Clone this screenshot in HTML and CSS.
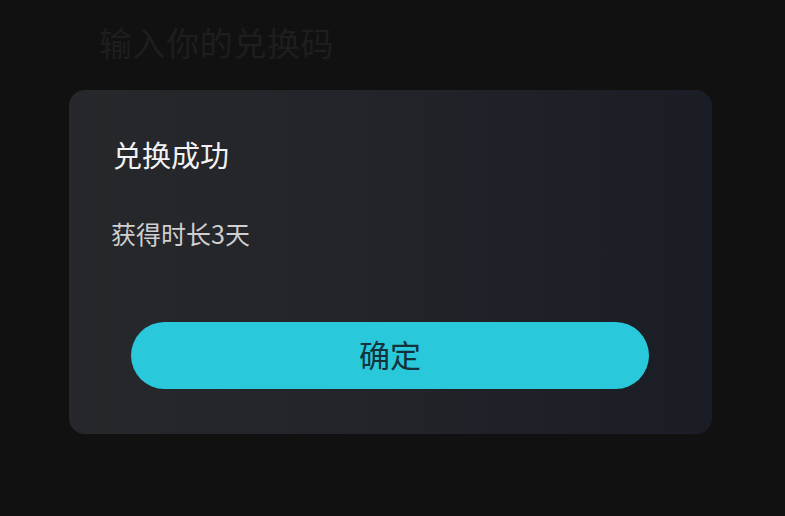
FILE: index.html
```html
<!DOCTYPE html>
<html lang="zh">
<head>
<meta charset="utf-8">
<link rel="stylesheet" href="styles.css">
</head>
<body>
<div class="page">
  <div class="input-placeholder">输入你的兑换码</div>
  <div class="dialog">
    <div class="dialog-title">兑换成功</div>
    <div class="dialog-text">获得时长3天</div>
    <button class="confirm-btn">确定</button>
  </div>
</div>
</body>
</html>
```
FILE: styles.css
```css
html, body {
  margin: 0;
  padding: 0;
  background: #111111;
  width: 785px;
  height: 516px;
  overflow: hidden;
  font-family: "Noto Sans CJK SC", "Noto Sans", sans-serif;
}
.page {
  padding-top: 22px;
}
.input-placeholder {
  margin-left: 99px;
  font-size: 33px;
  letter-spacing: 0.6px;
  line-height: 40px;
  color: #1e1e1f;
  height: 40px;
}
.dialog {
  margin-top: 28px;
  margin-left: 69px;
  width: 643px;
  box-sizing: border-box;
  height: 344px;
  border-radius: 16px;
  background: linear-gradient(90deg, #27282c 0%, #24252a 40%, #1f2128 70%, #1a1d25 100%);
  padding: 44px 63px 45px 62px;
  display: flex;
  flex-direction: column;
}
.dialog-title {
  margin-left: -18px;
  font-size: 29px;
  line-height: 40px;
  color: #f2f2f2;
}
.dialog-text {
  margin-left: -20px;
  margin-top: 42px;
  font-size: 25px;
  line-height: 34px;
  color: #cfcfcf;
}
.confirm-btn {
  margin-top: 72px;
  height: 67px;
  width: 100%;
  border: none;
  border-radius: 34px;
  background: #29c9db;
  color: #13323b;
  font-family: inherit;
  font-size: 31px;
  padding: 0 0 4px 0;
}
```
